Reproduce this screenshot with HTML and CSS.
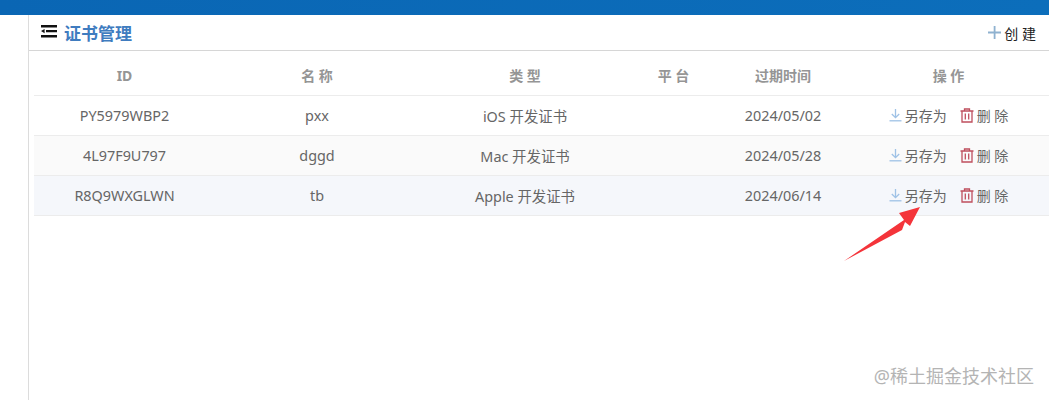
FILE: index.html
```html
<!DOCTYPE html>
<html lang="zh">
<head>
<meta charset="utf-8">
<title>证书管理</title>
<link rel="stylesheet" href="styles.css">
</head>
<body>
<div class="topbar"></div>
<div class="layout">
  <aside class="side"></aside>
  <main class="main">
    <header class="head">
      <div class="title">
        <svg class="menu-icon" width="16" height="13" viewBox="0 0 16 13"><path d="M0 0h16v2.400H0zM5 5h11v2.200H5zM0 10h16v2.600H0zM0 6.100l3.600-2.200v4.400z" fill="#111"/></svg>
        <span>证书管理</span>
      </div>
      <div class="create">
        <svg width="13" height="13" viewBox="0 0 13 13"><path d="M5.700 0h1.800v13H5.700zM0 5.600h13v1.800H0z" fill="#8fb2d0"/></svg>
        <span>创 建</span>
      </div>
    </header>
    <table class="grid">
      <colgroup>
        <col class="c1"><col class="c2"><col class="c3"><col class="c4"><col class="c5"><col class="c6">
      </colgroup>
      <thead>
        <tr><th>ID</th><th>名 称</th><th>类 型</th><th>平 台</th><th>过期时间</th><th class="last">操 作</th></tr>
      </thead>
      <tbody>
        <tr>
          <td>PY5979WBP2</td><td>pxx</td><td>iOS 开发证书</td><td></td><td>2024/05/02</td>
          <td><div class="ops">
            <span class="op"><svg width="13" height="14" viewBox="0 0 13 14"><path d="M6.500 1v8.500M2.800 6l3.700 3.700L10.200 6" fill="none" stroke="#9fc2e6" stroke-width="1.300"/><path d="M0.500 12.800h12" stroke="#9fc2e6" stroke-width="1.300"/></svg>另存为</span>
            <span class="op"><svg width="14" height="15" viewBox="0 0 14 15"><path d="M0.500 3h13M4.500 3V1h5v2M2 3v11h10V3M5.300 5.500v6M8.700 5.500v6" fill="none" stroke="#bf4f5e" stroke-width="1.300"/></svg>删 除</span>
          </div></td>
        </tr>
        <tr class="alt">
          <td>4L97F9U797</td><td>dggd</td><td>Mac 开发证书</td><td></td><td>2024/05/28</td>
          <td><div class="ops">
            <span class="op"><svg width="13" height="14" viewBox="0 0 13 14"><path d="M6.500 1v8.500M2.800 6l3.700 3.700L10.200 6" fill="none" stroke="#9fc2e6" stroke-width="1.300"/><path d="M0.500 12.800h12" stroke="#9fc2e6" stroke-width="1.300"/></svg>另存为</span>
            <span class="op"><svg width="14" height="15" viewBox="0 0 14 15"><path d="M0.500 3h13M4.500 3V1h5v2M2 3v11h10V3M5.300 5.500v6M8.700 5.500v6" fill="none" stroke="#bf4f5e" stroke-width="1.300"/></svg>删 除</span>
          </div></td>
        </tr>
        <tr class="hover">
          <td>R8Q9WXGLWN</td><td>tb</td><td>Apple 开发证书</td><td></td><td>2024/06/14</td>
          <td><div class="ops">
            <span class="op"><svg width="13" height="14" viewBox="0 0 13 14"><path d="M6.500 1v8.500M2.800 6l3.700 3.700L10.200 6" fill="none" stroke="#9fc2e6" stroke-width="1.300"/><path d="M0.500 12.800h12" stroke="#9fc2e6" stroke-width="1.300"/></svg>另存为</span>
            <span class="op"><svg width="14" height="15" viewBox="0 0 14 15"><path d="M0.500 3h13M4.500 3V1h5v2M2 3v11h10V3M5.300 5.500v6M8.700 5.500v6" fill="none" stroke="#bf4f5e" stroke-width="1.300"/></svg>删 除</span>
          </div></td>
        </tr>
      </tbody>
    </table>
  </main>
</div>
<svg class="arrow" width="80" height="56" viewBox="0 0 80 56"><path d="M0 54L60 13 55 6 76 0 66 19 61 15 58 23z" fill="#f4343a"/></svg>
<div class="watermark">@稀土掘金技术社区</div>
</body>
</html>
```

FILE: styles.css
```css
* { box-sizing: border-box; }
html, body { margin: 0; height: 100%; overflow: hidden; background: #fff; }
body {
  position: relative;
  font-family: "Noto Sans", "Noto Sans CJK SC", sans-serif;
  font-size: 14px;
  color: #666;
}
.topbar { height: 15px; background: linear-gradient(90deg, #0a66b4, #0c6ebb); }
.layout { display: flex; height: 385px; }
.side { width: 29px; flex: none; border-right: 1px solid #dcdcdc; }
.main { flex: 1; min-width: 0; }
.head {
  height: 36px;
  display: flex;
  align-items: center;
  justify-content: space-between;
  border-bottom: 1px solid #d6d6d6;
  padding: 0 13px 0 12px;
}
.title {
  display: flex;
  align-items: center;
  gap: 7px;
  font-size: 17px;
  font-weight: 700;
  color: #3f7cbf;
}
.menu-icon { margin-top: -3px; }
.create { display: flex; align-items: center; gap: 3px; color: #222; font-size: 14px; }
.grid {
  margin-left: 5px;
  width: 1015px;
  table-layout: fixed;
  border-collapse: collapse;
}
.c1 { width: 181px; } .c2 { width: 204px; } .c3 { width: 212px; }
.c4 { width: 85px; } .c5 { width: 134px; } .c6 { width: 199px; }
th {
  height: 44px;
  padding: 5px 0 0;
  font-size: 14px;
  font-weight: 700;
  color: #959595;
  text-align: center;
  border-bottom: 1px solid #ececec;
}
th.last { padding-right: 2px; }
td {
  height: 40px;
  padding: 0;
  font-size: 14.400px;
  text-align: center;
  border-bottom: 1px solid #ececec;
}
.alt td { background: #fafafa; }
.hover td { background: #f5f7fb; }
.ops { display: flex; justify-content: center; gap: 13px; padding-right: 2px; }
.op { display: inline-flex; align-items: center; gap: 3px; font-size: 14px; }
.arrow { position: absolute; left: 844px; top: 207px; }
.watermark {
  position: absolute;
  right: 15px;
  top: 363px;
  font-size: 18px;
  line-height: 26px;
  color: #b4b4b4;
}
```
